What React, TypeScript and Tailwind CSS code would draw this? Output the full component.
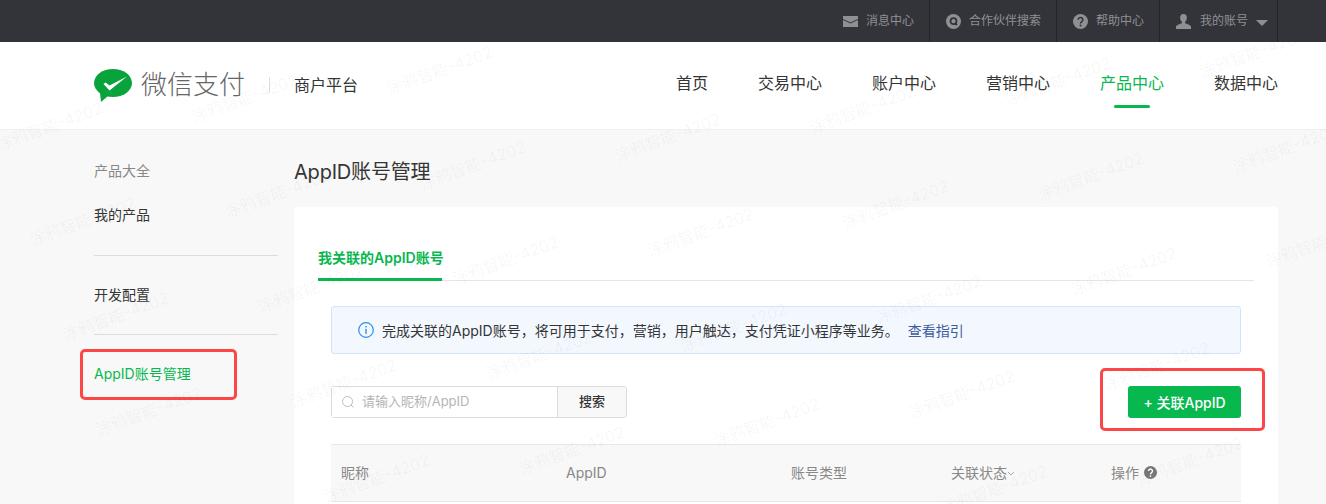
import React from "react";

const marks: [number, number][] = [];
for (let i = -6; i <= 6; i++) {
  for (let j = -5; j <= 5; j++) {
    const x = 537 + i * 195 + j * 33 - 54;
    const y = 355 - i * 28 + j * 95 - 12;
    if (x > -60 && x < 1290 && y > 34 && y < 490) marks.push([x, y]);
  }
}

function TopItem({ icon, label, className }: { icon: React.ReactNode; label: React.ReactNode; className: string }) {
  return (
    <div className={`h-full flex items-center border-r border-[#232429] ${className}`}>
      {icon}
      {label}
    </div>
  );
}

export default function App() {
  return (
    <div className="relative h-[504px] w-[1326px] overflow-hidden bg-[#f8f8f8] text-[14px] text-[#353535] [font-family:Inter,'Noto_Sans_CJK_SC',sans-serif]">
      <div className="h-[42px] bg-[#33343a] flex justify-end pr-[48px] text-[12px] text-[#8f9094]">
        <TopItem
          className="w-[110px] pl-[23px] gap-[8px]"
          icon={
            <svg width="15" height="11" viewBox="0 0 15 11">
              <path d="M0 0h15v3L7.5 6.5 0 3z" fill="#8f9094" />
              <path d="M0 4l7.5 3.5L15 4v7H0z" fill="#8f9094" />
            </svg>
          }
          label="消息中心"
        />
        <TopItem
          className="w-[127px] pl-[16px] gap-[8px]"
          icon={
            <svg width="15" height="15" viewBox="0 0 15 15">
              <circle cx="7.5" cy="7.5" r="7.5" fill="#8f9094" />
              <circle cx="7.5" cy="7.2" r="3" fill="none" stroke="#33343a" strokeWidth="1.8" />
              <path d="M9.5 9.5l1.6 1.6" stroke="#33343a" strokeWidth="1.6" />
            </svg>
          }
          label="合作伙伴搜索"
        />
        <TopItem
          className="w-[103px] pl-[16px] gap-[8px]"
          icon={
            <svg width="15" height="15" viewBox="0 0 15 15">
              <circle cx="7.5" cy="7.5" r="7.5" fill="#8f9094" />
              <path d="M5.2 5.8a2.3 2.3 0 1 1 3.6 1.9c-.9.6-1.3 1-1.3 1.9" fill="none" stroke="#33343a" strokeWidth="1.6" />
              <circle cx="7.5" cy="11.6" r="1" fill="#33343a" />
            </svg>
          }
          label="帮助中心"
        />
        <TopItem
          className="w-[118px] pl-[16px] gap-[9px]"
          icon={
            <svg width="15" height="15" viewBox="0 0 15 15">
              <path d="M7.5 0c2.2 0 3.4 1.6 3.4 3.8 0 1.8-.9 3.3-1.8 4v1.4c1.8.8 5.4 1.6 5.9 3.3V15H0v-2.5c.5-1.7 4.1-2.5 5.9-3.3V7.8c-.9-.7-1.8-2.2-1.8-4C4.1 1.600 5.3 0 7.5 0z" fill="#8f9094" />
            </svg>
          }
          label={
            <span className="flex items-center">
              我的账号
              <span className="ml-[8px] mt-[3px] w-0 h-0 border-x-[6px] border-x-transparent border-t-[6px] border-t-[#8f9094]" />
            </span>
          }
        />
      </div>

      <div className="h-[88px] bg-white border-b border-[#f0f0f0] flex items-center pl-[94px] pr-[48px]">
        <svg width="38" height="33" viewBox="0 0 38 33">
          <ellipse cx="19" cy="14" rx="19" ry="14" fill="#09a33c" />
          <path d="M6 24l1 9 7-6z" fill="#09a33c" />
          <path d="M9.5 15l2-1.5 4 3L33 7.5 15.5 21.5z" fill="#ffffff" />
        </svg>
        <span className="ml-[9px] mb-[2px] text-[26px] leading-none font-light text-[#666666]">微信支付</span>
        <span className="ml-[24px] mb-[2px] w-px h-[16px] bg-[#dddddd]" />
        <span className="ml-[24px] mb-[2px] text-[16px] text-[#353535]">商户平台</span>
        <nav className="ml-auto mb-[6px] flex gap-[50px] text-[16px]">
          <span>首页</span>
          <span>交易中心</span>
          <span>账户中心</span>
          <span>营销中心</span>
          <span className="relative text-[#07b84f]">
            产品中心
            <span className="absolute left-[14px] top-[34px] w-[36px] h-[3px] rounded-sm bg-[#07b84f]" />
          </span>
          <span>数据中心</span>
        </nav>
      </div>

      <div className="flex pl-[94px] pr-[48px]">
        <aside className="w-[184px] mr-[16px] shrink-0">
          <div className="pt-[31px] text-[#888888] leading-[20px]">产品大全</div>
          <div className="mt-[24px] leading-[20px] pb-[30px] border-b border-[#dcdcdc]">我的产品</div>
          <div className="mt-[29px] leading-[20px] pb-[29px] border-b border-[#dcdcdc]">开发配置</div>
          <div className="mt-[29px] leading-[20px] text-[#07b84f]">AppID账号管理</div>
        </aside>
        <main className="flex-1">
          <h1 className="mt-[28px] text-[20px] leading-[28px] font-normal tracking-[-0.2px]">AppID账号管理</h1>
          <div className="mt-[21px] bg-white rounded-t-[3px] px-[24px] h-[400px]">
            <div className="pt-[40px] border-b border-[#e5e5e5] h-[74px]">
              <div className="inline-block h-[33px] leading-[20px] border-b-[3px] border-[#07b84f] font-semibold text-[#07b84f] w-[124px] whitespace-nowrap">我关联的AppID账号</div>
            </div>
            <div className="mx-[13px]">
              <div className="mt-[25px] h-[48px] flex items-center bg-[#f3f8ff] border border-[#cfe5fb] rounded-[3px] pl-[26px]">
                <svg width="16" height="16" viewBox="0 0 16 16" fill="none">
                  <circle cx="8" cy="8" r="7.3" stroke="#2a8ff0" strokeWidth="1.2" />
                  <rect x="7.3" y="6.8" width="1.4" height="5" fill="#2a8ff0" />
                  <rect x="7.3" y="4" width="1.4" height="1.5" fill="#2a8ff0" />
                </svg>
                <span className="ml-[8px]">完成关联的AppID账号，将可用于支付，营销，用户触达，支付凭证小程序等业务。</span>
                <span className="ml-[9px] text-[#3c5c9c]">查看指引</span>
              </div>
              <div className="mt-[32px] flex justify-between">
                <div className="flex h-[32px] w-[296px] border border-[#dcdcdc] rounded-[3px]">
                  <div className="w-[226px] flex items-center pl-[10px] gap-[8px] border-r border-[#dcdcdc] bg-white text-[13px] text-[#b5b5b5]">
                    <svg width="12" height="12" viewBox="0 0 12 12" fill="none" stroke="#bdbdbd">
                      <circle cx="5.5" cy="5.5" r="5" />
                      <path d="M9 9l2.5 2.5" />
                    </svg>
                    请输入昵称/AppID
                  </div>
                  <div className="flex-1 flex items-center justify-center bg-[#f8f8f8] rounded-r-[3px] font-medium text-[13px]">搜索</div>
                </div>
                <div className="w-[113px] h-[32px] flex items-center justify-center rounded-[3px] bg-[#07b84f] text-white font-medium text-[14px]">+ 关联AppID</div>
              </div>
              <div className="mt-[26px] h-[58px] pb-[2px] bg-[#f8f8f8] border-y border-[#e7e7e7] flex items-center text-[#888888] whitespace-nowrap">
                <span className="w-[235px] pl-[10px]">昵称</span>
                <span className="w-[225px]">AppID</span>
                <span className="w-[160px]">账号类型</span>
                <span className="w-[160px] flex items-center">
                  关联状态
                  <svg width="8" height="5" viewBox="0 0 8 5" fill="none" stroke="#aaaaaa" className="mt-[2px]">
                    <path d="M1 1l3 3 3-3" />
                  </svg>
                </span>
                <span className="flex items-center gap-[5px]">
                  操作
                  <svg width="13" height="13" viewBox="0 0 15 15">
                    <circle cx="7.5" cy="7.5" r="7.5" fill="#777777" />
                    <path d="M5.2 5.8a2.3 2.3 0 1 1 3.6 1.9c-.9.6-1.3 1-1.3 1.9" fill="none" stroke="#ffffff" strokeWidth="1.6" />
                    <circle cx="7.5" cy="11.6" r="1" fill="#ffffff" />
                  </svg>
                </span>
              </div>
            </div>
          </div>
        </main>
      </div>

      <div className="absolute left-[80px] top-[349px] w-[157px] h-[51px] border-[3px] border-[#fb4747] rounded-[5px]" />
      <div className="absolute left-[1100px] top-[368px] w-[165px] h-[63px] border-[3px] border-[#fb4747] rounded-[5px]" />

      <div className="absolute inset-0 pointer-events-none">
        {marks.map(([x, y], i) => (
          <span
            key={i}
            className="absolute whitespace-nowrap text-[16px] text-[#0000000b] -rotate-[20deg]"
            style={{ left: x, top: y }}
          >
            涂鸦智能-4202
          </span>
        ))}
      </div>
    </div>
  );
}
